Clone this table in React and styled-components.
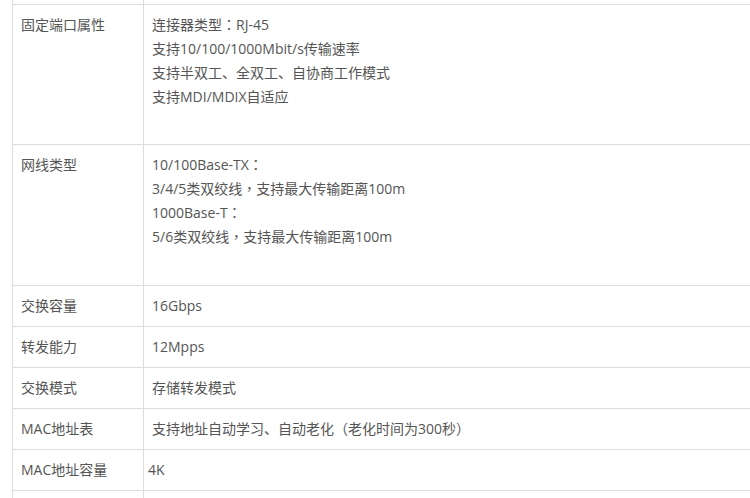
import React from 'react';
import styled, { createGlobalStyle } from 'styled-components';

const GlobalStyle = createGlobalStyle`
    html, body {
        margin: 0;
        padding: 0;
        background: #fff;
        overflow: hidden;
    }
    body {
        font-family: "Open Sans", "Noto Sans CJK SC", sans-serif;
    }
`;

const Page = styled.div`
    width: 750px;
    height: 498px;
    overflow: hidden;
    padding-left: 12px;
    box-sizing: border-box;
`;

const Table = styled.table`
    border-collapse: collapse;
    width: 800px;
    table-layout: fixed;
    font-size: 14px;
    line-height: 24px;
    color: #555;
    text-spacing-trim: space-all;
`;

const Row = styled.tr`
    height: ${p => p.h}px;
`;

const Cell = styled.td`
    border: 1px solid #ddd;
    padding: 8px ${p => p.pad || 8}px;
    vertical-align: ${p => (p.top ? 'top' : 'middle')};
    white-space: nowrap;
`;

const Line = styled.div`
    line-height: 24px;
`;

// full-width punctuation sits centred in the original font
const Punct = styled.span.attrs({ lang: 'zh-TW' })`
    font-family: "Open Sans", "Noto Sans CJK TC", sans-serif;
`;

const withPunct = text =>
    text.split(/([：，（）])/).map((part, i) =>
        /^[：，（）]$/.test(part) ? <Punct key={i}>{part}</Punct> : part
    );

const rows = [
    { h: 140, label: '固定端口属性', lines: ['连接器类型：RJ-45', '支持10/100/1000Mbit/s传输速率', '支持半双工、全双工、自协商工作模式', '支持MDI/MDIX自适应'] },
    { h: 141, label: '网线类型', lines: ['10/100Base-TX：', '3/4/5类双绞线，支持最大传输距离100m', '1000Base-T：', '5/6类双绞线，支持最大传输距离100m'] },
    { h: 41, label: '交换容量', lines: ['16Gbps'] },
    { h: 41, label: '转发能力', lines: ['12Mpps'] },
    { h: 41, label: '交换模式', lines: ['存储转发模式'] },
    { h: 41, label: 'MAC地址表', lines: ['支持地址自动学习、自动老化（老化时间为300秒）'] },
    { h: 41, label: 'MAC地址容量', lines: ['4K'], pad: 4 },
    { h: 41, label: '', lines: [''] },
];

export default function App() {
    return (
        <Page>
            <GlobalStyle />
            <Table lang="zh-CN">
                <colgroup>
                    <col style={{ width: 131 }} />
                    <col />
                </colgroup>
                <tbody>
                    <Row h={4}>
                        <Cell style={{ padding: 0, borderTop: 'none' }} />
                        <Cell style={{ padding: 0, borderTop: 'none' }} />
                    </Row>
                    {rows.map((r, i) => (
                        <Row key={i} h={r.h}>
                            <Cell top={r.lines.length > 1}>{r.label}</Cell>
                            <Cell top={r.lines.length > 1} pad={r.pad}>
                                {r.lines.map((l, j) => <Line key={j}>{withPunct(l)}</Line>)}
                            </Cell>
                        </Row>
                    ))}
                </tbody>
            </Table>
        </Page>
    );
}
